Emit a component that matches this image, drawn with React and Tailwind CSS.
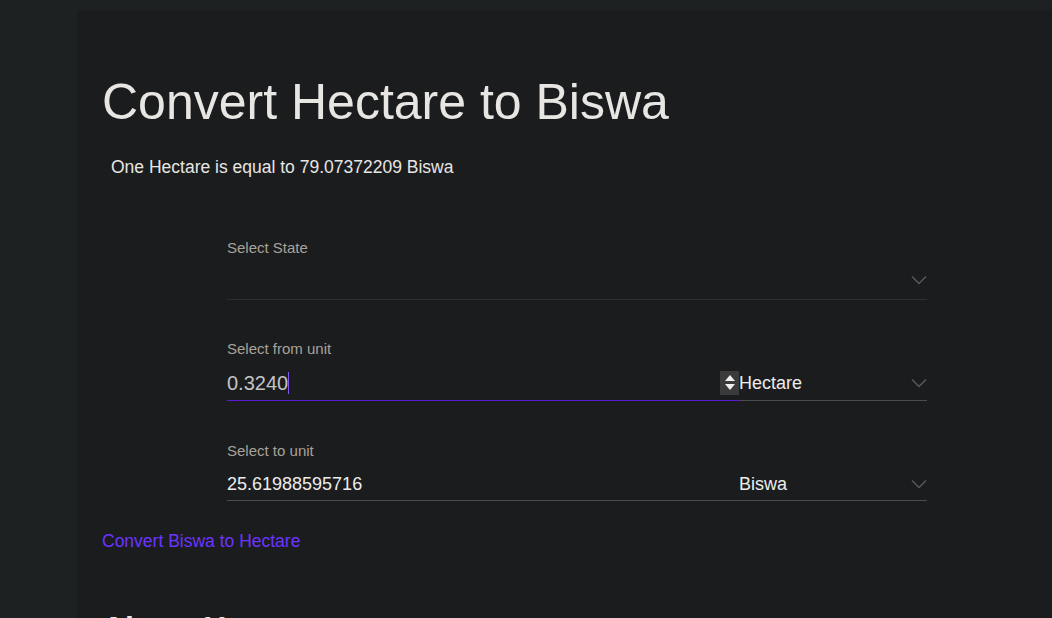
import React from "react";

function Chevron() {
  return (
    <svg width="16" height="10" viewBox="0 0 16 10" className="shrink-0">
      <path d="M1 1.5 L8 8.5 L15 1.5" fill="none" stroke="#55595c" strokeWidth="1.5" />
    </svg>
  );
}

export default function App() {
  return (
    <div className="w-[1052px] h-[618px] overflow-hidden bg-[#1e2122] pt-[10px] pl-[77px]" style={{ fontFamily: '"Liberation Sans", Arial, sans-serif' }}>
      <div className="h-[700px] bg-[#1b1c1e] pl-[25px] pt-[64px]">
        <h1 className="text-[50px] leading-[56px] text-[#e8e6e3]">Convert Hectare to Biswa</h1>
        <p className="mt-[27px] pl-[9px] text-[17.5px] leading-[20px] text-[#e8e6e3]">One Hectare is equal to 79.07372209 Biswa</p>

        <div className="ml-[125px] w-[700px] mt-[63px]">
          <div className="text-[15px] leading-[16px] text-[#a8a29a]">Select State</div>
          <div className="h-[44px] border-b border-[#2c2e30] flex items-center justify-end pt-[4px]">
            <Chevron />
          </div>

          <div className="mt-[41px] text-[15px] leading-[16px] text-[#a8a29a]">Select from unit</div>
          <div className="h-[44px] flex">
            <div className="w-[512px] h-full border-b border-[#5a1bd6] flex items-center justify-between pt-[8px]">
              <span className="text-[20px] leading-[24px] text-[#c4c4c4] flex items-center">0.3240<span className="inline-block w-px h-[22px] bg-[#7e56f0]"></span></span>
              <span className="w-[19px] h-[24px] bg-[#3b3b3b] flex flex-col items-center justify-center gap-[3px]">
                <svg width="10" height="6" viewBox="0 0 10 6"><path d="M5 0 L10 6 L0 6 Z" fill="#f0f0f0" /></svg>
                <svg width="10" height="6" viewBox="0 0 10 6"><path d="M0 0 L10 0 L5 6 Z" fill="#f0f0f0" /></svg>
              </span>
            </div>
            <div className="flex-1 h-full border-b border-[#4a4c4e] flex items-center justify-between pt-[8px]">
              <span className="text-[18px] leading-[22px] text-[#ececec]">Hectare</span>
              <Chevron />
            </div>
          </div>

          <div className="mt-[42px] text-[15px] leading-[16px] text-[#a8a29a]">Select to unit</div>
          <div className="h-[42px] flex border-b border-[#4a4c4e] pt-[9px]">
            <div className="w-[512px] flex items-center">
              <span className="text-[18px] leading-[22px] text-[#ececec]">25.61988595716</span>
            </div>
            <div className="flex-1 flex items-center justify-between">
              <span className="text-[18px] leading-[22px] text-[#ececec]">Biswa</span>
              <Chevron />
            </div>
          </div>
        </div>

        <a className="block mt-[30px] text-[17.5px] leading-[20px] text-[#6c34ff]">Convert Biswa to Hectare</a>

        <h2 className="mt-[57px] text-[32px] leading-[40px] font-bold text-[#e8e6e3]">About Hectare</h2>
      </div>
    </div>
  );
}
